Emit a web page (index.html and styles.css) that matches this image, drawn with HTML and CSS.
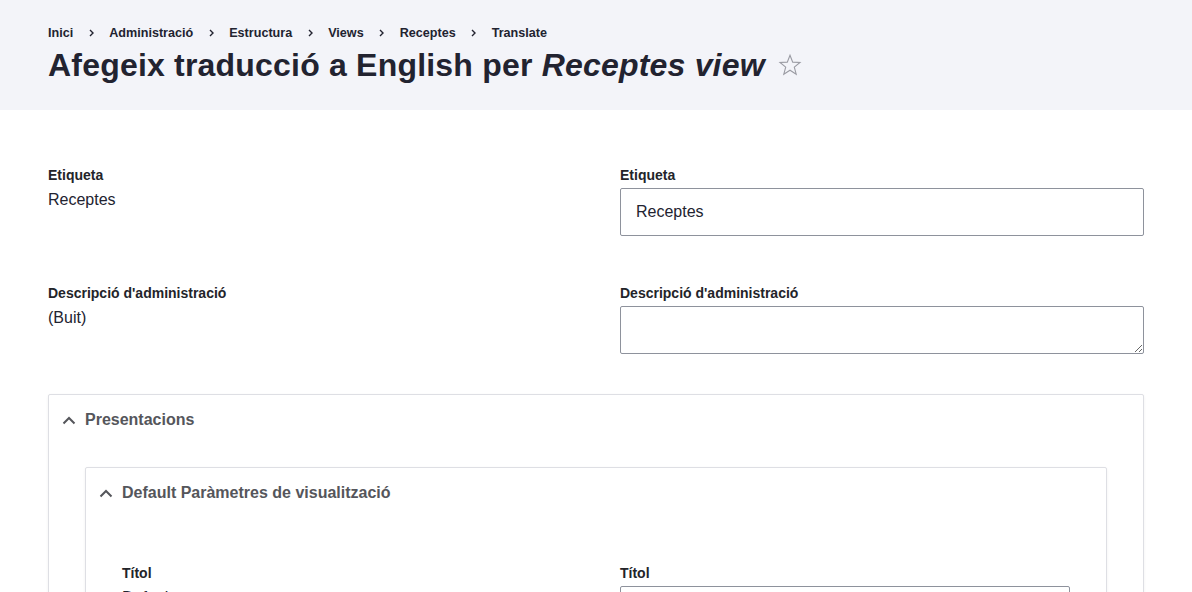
FILE: index.html
```html
<!DOCTYPE html>
<html lang="ca">
<head>
<meta charset="utf-8">
<title>Afegeix traducció</title>
<link rel="stylesheet" href="styles.css">
</head>
<body>
<header class="page-header">
  <nav class="breadcrumb">
    <a>Inici</a>
    <svg class="sep" viewBox="0 0 5 8" width="5" height="8"><path d="M1 1l3 3-3 3" fill="none" stroke="#222330" stroke-width="1.4"/></svg>
    <a>Administració</a>
    <svg class="sep" viewBox="0 0 5 8" width="5" height="8"><path d="M1 1l3 3-3 3" fill="none" stroke="#222330" stroke-width="1.4"/></svg>
    <a>Estructura</a>
    <svg class="sep" viewBox="0 0 5 8" width="5" height="8"><path d="M1 1l3 3-3 3" fill="none" stroke="#222330" stroke-width="1.4"/></svg>
    <a>Views</a>
    <svg class="sep" viewBox="0 0 5 8" width="5" height="8"><path d="M1 1l3 3-3 3" fill="none" stroke="#222330" stroke-width="1.4"/></svg>
    <a>Receptes</a>
    <svg class="sep" viewBox="0 0 5 8" width="5" height="8"><path d="M1 1l3 3-3 3" fill="none" stroke="#222330" stroke-width="1.4"/></svg>
    <a>Translate</a>
  </nav>
  <h1 class="title">Afegeix traducció a English per <em>Receptes view</em>
    <svg class="star" viewBox="0 0 24 24" width="24" height="24"><path d="M12 2.2l2.7 6.9 7.3.4-5.7 4.6 1.9 7.1L12 17.2l-6.2 4 1.9-7.1L2 9.5l7.3-.4z" fill="none" stroke="#9a9ba3" stroke-width="1.1" stroke-linejoin="miter"/></svg>
  </h1>
</header>

<main class="content">
  <div class="row">
    <div class="cell">
      <div class="label">Etiqueta</div>
      <div class="value">Receptes</div>
    </div>
    <div class="cell">
      <div class="label">Etiqueta</div>
      <input class="input" type="text" value="Receptes">
    </div>
  </div>
  <div class="row">
    <div class="cell">
      <div class="label">Descripció d'administració</div>
      <div class="value">(Buit)</div>
    </div>
    <div class="cell">
      <div class="label">Descripció d'administració</div>
      <textarea class="textarea"></textarea>
    </div>
  </div>

  <section class="details">
    <div class="summary">
      <svg class="chev" viewBox="0 0 14 9" width="14" height="9"><path d="M1.5 7.5L7 2l5.5 5.5" fill="none" stroke="#55565b" stroke-width="2"/></svg>
      <span>Presentacions</span>
    </div>
    <div class="details-body">
      <section class="details inner">
        <div class="summary">
          <svg class="chev" viewBox="0 0 14 9" width="14" height="9"><path d="M1.5 7.5L7 2l5.5 5.5" fill="none" stroke="#55565b" stroke-width="2"/></svg>
          <span>Default Paràmetres de visualització</span>
        </div>
        <div class="details-body inner-body">
          <div class="row row-inner">
            <div class="cell">
              <div class="label">Títol</div>
              <div class="value">Default</div>
            </div>
            <div class="cell">
              <div class="label">Títol</div>
              <input class="input" type="text" value="Default">
            </div>
          </div>
        </div>
      </section>
    </div>
  </section>
</main>
</body>
</html>
```

FILE: styles.css
```css
* { box-sizing: border-box; }
html, body { margin: 0; padding: 0; }
body {
  font-family: "Liberation Sans", Arial, sans-serif;
  color: #222330;
  background: #fff;
  overflow: hidden;
}
.page-header {
  background: #f3f4f9;
  padding: 24px 48px 25px;
}
.breadcrumb {
  display: flex;
  align-items: center;
  gap: 15.5px;
  font-size: 12.6px;
  line-height: 18px;
  font-weight: bold;
  height: 18px;
}
.breadcrumb a { color: #222330; }
.sep { display: block; }
.title {
  margin: 3px 0 0;
  font-size: 32px;
  line-height: 40px;
  font-weight: bold;
  letter-spacing: 0.2px;
  color: #222330;
  display: flex;
  align-items: center;
  white-space: pre;
}
.title em { font-style: italic; }
.star { margin-left: 13px; display: block; }
.content {
  padding: 56px 48px 0;
}
.row {
  display: grid;
  grid-template-columns: 572px 524px;
  margin-bottom: 48px;
}
.row + .row { margin-bottom: 40px; }
.label {
  font-size: 14px;
  line-height: 18px;
  font-weight: bold;
  color: #232429;
  margin-bottom: 4px;
}
.value {
  font-size: 16px;
  line-height: 24px;
  color: #222330;
}
.input, .textarea {
  display: block;
  width: 100%;
  height: 48px;
  border: 1px solid #8e929c;
  border-radius: 2px;
  padding: 0 15px;
  font-family: "Liberation Sans", Arial, sans-serif;
  font-size: 16px;
  color: #222330;
  background: #fff;
  margin: 0;
}
.textarea { resize: vertical; padding: 11px 15px; }
.details {
  border: 1px solid #dedfe4;
  border-radius: 2px;
  box-shadow: 0 1px 3px rgba(0,0,0,0.06);
  background: #fff;
}
.summary {
  display: flex;
  align-items: center;
  gap: 9px;
  padding: 13px 13px 12px;
  font-size: 16px;
  line-height: 24px;
  font-weight: bold;
  color: #55565b;
}
.chev { display: block; }
.details-body {
  padding: 23px 36px 0;
}
.inner-body { padding-top: 47px; }
.row-inner {
  grid-template-columns: 498px 450px;
  margin-bottom: 40px;
}
```
